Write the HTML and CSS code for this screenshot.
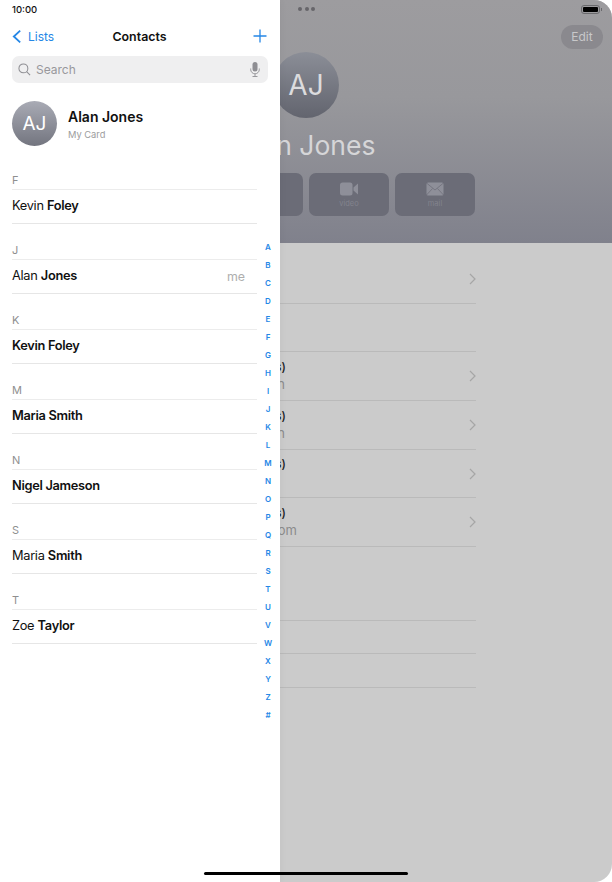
FILE: index.html
```html
<!DOCTYPE html>
<html lang="en">
<head>
  <meta charset="UTF-8" />
  <title>Contacts</title>
  <link rel="stylesheet" href="styles.css">
</head>
<body>

<div class="screen">

  <!-- Contact detail, centred on the whole screen; the list slides over it -->
  <main class="detail">
    <header class="hero">
      <div class="hero-status">
        <div class="dots"><i></i><i></i><i></i></div>
        <div class="battery"><i></i></div>
      </div>
      <div class="hero-bar"><span class="edit">Edit</span></div>
      <div class="hero-col">
        <div class="hero-avatar">AJ</div>
        <div class="hero-name">Alan Jones</div>
        <div class="actions">
          <div class="action"><span class="action-label">message</span></div>
          <div class="action"><span class="action-label">call</span></div>
          <div class="action">
            <svg class="action-icon" viewBox="0 0 18 14"><rect x="0" y="0.5" width="12.5" height="13" rx="2.5" fill="#8e8f99"/><path d="M13.5 5.5 18 1.5v11l-4.500-4z" fill="#8e8f99"/></svg>
            <span class="action-label">video</span>
          </div>
          <div class="action">
            <svg class="action-icon" viewBox="0 0 18 14"><rect x="0.5" y="0.500" width="17" height="13" rx="1.5" fill="#8e8f99"/><path d="M0.500 1 9 8l8.500-7M0.500 13 6.500 6.500M17.500 13l-6-6.500" fill="none" stroke="#6b6c77" stroke-width="0.7"/></svg>
            <span class="action-label">mail</span>
          </div>
        </div>
      </div>
    </header>

    <section class="fields">
      <div class="field field-first">
        <svg class="chevron" viewBox="0 0 7 12"><path d="M1 1l5 5-5 5" /></svg>
      </div>
      <div class="field field-plain"></div>
      <div class="field field-tall">
        <div class="field-text"><div class="field-label">s)</div><div class="field-value">n</div></div>
        <svg class="chevron" viewBox="0 0 7 12"><path d="M1 1l5 5-5 5" /></svg>
      </div>
      <div class="field field-tall">
        <div class="field-text"><div class="field-label">s)</div><div class="field-value">n</div></div>
        <svg class="chevron" viewBox="0 0 7 12"><path d="M1 1l5 5-5 5" /></svg>
      </div>
      <div class="field">
        <div class="field-text"><div class="field-label">s)</div><div class="field-value"></div></div>
        <svg class="chevron" viewBox="0 0 7 12"><path d="M1 1l5 5-5 5" /></svg>
      </div>
      <div class="field field-tall">
        <div class="field-text"><div class="field-label">s)</div><div class="field-value value-long">om</div></div>
        <svg class="chevron" viewBox="0 0 7 12"><path d="M1 1l5 5-5 5" /></svg>
      </div>
      <div class="field field-notes"></div>
      <div class="field field-link"></div>
      <div class="field field-link field-last"></div>
    </section>
  </main>

  <!-- Contacts list -->
  <aside class="sidebar">
    <div class="status">10:00</div>

    <nav class="nav">
      <a class="back">
        <svg viewBox="0 0 11 16" class="back-icon"><path d="M9 1.500 2 8l7 6.500" /></svg>
        Lists
      </a>
      <div class="nav-title">Contacts</div>
      <svg class="plus" viewBox="0 0 14 14"><path d="M7 0.500v13M0.500 7h13" /></svg>
    </nav>

    <div class="search">
      <svg class="search-icon" viewBox="0 0 14 14"><circle cx="5.800" cy="5.800" r="4.800"/><path d="M9.300 9.300 13 13" /></svg>
      <span class="search-text">Search</span>
      <svg class="mic" viewBox="0 0 10 15"><rect x="2.500" y="0" width="5" height="9.500" rx="2.500" fill="#8e8e93"/><path d="M0.700 6.500v1a4.300 4.300 0 0 0 8.600 0v-1M5 12v2.500M2.500 14.500h5" fill="none" stroke="#8e8e93" stroke-width="0.9"/></svg>
    </div>

    <div class="my-card">
      <div class="avatar">AJ</div>
      <div class="my-text">
        <div class="my-name">Alan Jones</div>
        <div class="my-sub">My Card</div>
      </div>
    </div>

    <div class="groups">
      <section class="group">
        <h3 class="group-head">F</h3>
        <div class="person">Kevin <b>Foley</b></div>
      </section>
      <section class="group">
        <h3 class="group-head">J</h3>
        <div class="person"><span class="me">me</span>Alan <b>Jones</b></div>
      </section>
      <section class="group">
        <h3 class="group-head">K</h3>
        <div class="person"><b>Kevin Foley</b></div>
      </section>
      <section class="group">
        <h3 class="group-head">M</h3>
        <div class="person"><b>Maria Smith</b></div>
      </section>
      <section class="group">
        <h3 class="group-head">N</h3>
        <div class="person"><b>Nigel Jameson</b></div>
      </section>
      <section class="group">
        <h3 class="group-head">S</h3>
        <div class="person">Maria <b>Smith</b></div>
      </section>
      <section class="group">
        <h3 class="group-head">T</h3>
        <div class="person">Zoe <b>Taylor</b></div>
      </section>
    </div>

    <div class="index">
      <span>A</span><span>B</span><span>C</span><span>D</span><span>E</span><span>F</span><span>G</span>
      <span>H</span><span>I</span><span>J</span><span>K</span><span>L</span><span>M</span><span>N</span>
      <span>O</span><span>P</span><span>Q</span><span>R</span><span>S</span><span>T</span><span>U</span>
      <span>V</span><span>W</span><span>X</span><span>Y</span><span>Z</span><span>#</span>
    </div>
  </aside>

  <div class="home-bar"></div>
</div>

</body>
</html>
```

FILE: styles.css
```css
/* Page setup */
html, body {
  margin: 0;
  padding: 0;
  background: #fff;
  font-family: 'Inter', 'Liberation Sans', sans-serif;
}

.screen {
  position: relative;
  width: 612px;
  height: 882px;
  overflow: hidden;
  background: #fff;
}

/* Detail panel */
.detail {
  height: 100%;
  display: flex;
  flex-direction: column;
  background: #cbcbcb;
  border-radius: 18px;
  overflow: hidden;
}

.hero {
  height: 243px;
  flex-shrink: 0;
  box-sizing: border-box;
  background: linear-gradient(#9d9c9f, #98989c 40%, #80818c);
}

.hero-status {
  height: 18px;
  display: flex;
  align-items: center;
  justify-content: space-between;
  padding: 0 12px 0 298px;
}

.dots {
  display: flex;
  gap: 2.500px;
}

.dots i {
  width: 4px;
  height: 4px;
  border-radius: 50%;
  background: #66656a;
}

.battery {
  position: relative;
  width: 19px;
  height: 9px;
  box-sizing: border-box;
  border: 1px solid #6a6a6d;
  border-radius: 3px;
  padding: 1px;
}

.battery i {
  display: block;
  height: 100%;
  background: #000;
  border-radius: 1px;
}

/* battery nub */
.battery::after {
  content: '';
  position: absolute;
  top: 2px;
  right: -3px;
  width: 1px;
  height: 3px;
  background: #6a6a6d;
}

.hero-bar {
  height: 24px;
  margin-top: 7px;
  display: flex;
  justify-content: flex-end;
  padding-right: 9px;
}

.edit {
  width: 42px;
  height: 24px;
  line-height: 24px;
  text-align: center;
  border-radius: 12px;
  background: #8a898e;
  color: #c8c8ca;
  font-size: 12px;
}

.hero-col {
  width: 340px;
  margin: 3px auto 0;
  display: flex;
  flex-direction: column;
  align-items: center;
}

.hero-avatar {
  width: 66px;
  height: 66px;
  border-radius: 50%;
  background: linear-gradient(#8b8e97, #62646e);
  color: #dcdcde;
  font-size: 28px;
  line-height: 66px;
  text-align: center;
}

.hero-name {
  margin-top: 9px;
  font-size: 26.500px;
  line-height: 36px;
  color: #d6d6d8;
}

.actions {
  margin-top: 10px;
  display: flex;
  gap: 6px;
}

.action {
  width: 80px;
  height: 43px;
  box-sizing: border-box;
  padding-top: 9px;
  border-radius: 7px;
  background: #6b6c77;
  display: flex;
  flex-direction: column;
  align-items: center;
  justify-content: flex-end;
  padding-bottom: 8px;
}

.action-icon {
  width: 18px;
  height: 14px;
  margin-bottom: 3px;
}

.action-label {
  font-size: 7.500px;
  line-height: 9px;
  color: #82838d;
}

/* Fields under the hero */
.fields {
  width: 340px;
  margin: 0 auto;
}

.field {
  height: 48px;
  box-sizing: border-box;
  border-bottom: 1px solid #bababa;
  display: flex;
  align-items: center;
  justify-content: space-between;
}

.field-tall { height: 49px; }
.field-first { height: 61px; padding-top: 12px; justify-content: flex-end; }
.field-plain { height: 48px; }
.field-notes { height: 74px; }
.field-link { height: 33px; }
.field-last { height: 34px; }

.field-text {
  width: 150px;
  text-align: right;
}

.field-label {
  font-size: 12px;
  line-height: 16px;
  font-weight: 500;
  color: #1c1c1e;
}

.field-value {
  min-height: 19px;
  font-size: 13px;
  line-height: 19px;
  color: #8b8b8b;
  white-space: nowrap;
  margin-right: 1px;
}

.value-long { margin-right: -11px; }

.chevron {
  width: 7px;
  height: 12px;
  margin-left: auto;
  fill: none;
  stroke: #a6a6a6;
  stroke-width: 1.200;
}

/* Contacts list */
.sidebar {
  position: absolute;
  top: 0;
  left: 0;
  bottom: 0;
  width: 280px;
  background: #fff;
  box-shadow: 2px 0 6px rgba(0, 0, 0, 0.03);
}

.status {
  height: 18px;
  line-height: 19px;
  padding-left: 12px;
  font-size: 9.500px;
  font-weight: 500;
  color: #111;
}

.nav {
  height: 22px;
  margin-top: 7px;
  padding: 0 13px 0 12px;
  display: grid;
  grid-template-columns: 1fr auto 1fr;
  align-items: center;
}

.back {
  display: flex;
  align-items: center;
  gap: 6px;
  font-size: 12px;
  color: #2587e6;
}

.back-icon {
  width: 10px;
  height: 15px;
  fill: none;
  stroke: #2587e6;
  stroke-width: 2;
}

.nav-title {
  font-size: 12.400px;
  font-weight: 600;
  color: #111;
}

.plus {
  justify-self: end;
  width: 14px;
  height: 14px;
  fill: none;
  stroke: #2587e6;
  stroke-width: 1.300;
}

.search {
  height: 27px;
  margin: 9px 12px 0;
  padding: 0 8px 0 6px;
  border-radius: 7px;
  background: #efeff0;
  display: flex;
  align-items: center;
}

.search-icon {
  width: 13px;
  height: 13px;
  fill: none;
  stroke: #8e8e93;
  stroke-width: 1.100;
}

.search-text {
  margin-left: 5px;
  flex: 1;
  font-size: 12px;
  color: #98989c;
}

.mic {
  width: 10px;
  height: 15px;
}

.my-card {
  margin-top: 18px;
  padding-left: 12px;
  display: flex;
  align-items: center;
  gap: 11px;
}

.avatar {
  width: 45px;
  height: 45px;
  border-radius: 50%;
  background: linear-gradient(#a9abb5, #73757f);
  color: #fff;
  font-size: 19px;
  line-height: 45px;
  text-align: center;
}

.my-text { padding-top: 2px; }

.my-name {
  font-size: 14px;
  line-height: 18px;
  font-weight: 600;
  color: #111;
}

.my-sub {
  margin-top: 3px;
  font-size: 9.300px;
  line-height: 12px;
  color: #9c9c9c;
}

.groups {
  margin-top: 8px;
  padding: 0 23px 0 12px;
}

.group-head {
  margin: 0;
  height: 36px;
  box-sizing: border-box;
  padding-top: 19px;
  font-size: 11px;
  line-height: 14px;
  font-weight: 400;
  color: #8f8f8f;
  border-bottom: 1px solid #ececec;
}

.person {
  height: 34px;
  box-sizing: border-box;
  line-height: 32px;
  font-size: 12.800px;
  letter-spacing: -0.300px;
  color: #111;
  border-bottom: 1px solid #e6e6e6;
}

.person b { font-weight: 600; }

.me {
  float: right;
  margin-right: 12px;
  font-size: 12.400px;
  letter-spacing: 0;
  color: #aeaeae;
  line-height: 33px;
}

.index {
  position: absolute;
  top: 238px;
  right: 6px;
  width: 12px;
  display: flex;
  flex-direction: column;
  align-items: center;
}

.index span {
  height: 18px;
  line-height: 18px;
  font-size: 8px;
  font-weight: 600;
  color: #2587e6;
}

.home-bar {
  position: absolute;
  left: 204px;
  bottom: 7px;
  width: 204px;
  height: 3.500px;
  border-radius: 2px;
  background: #000;
}
```
